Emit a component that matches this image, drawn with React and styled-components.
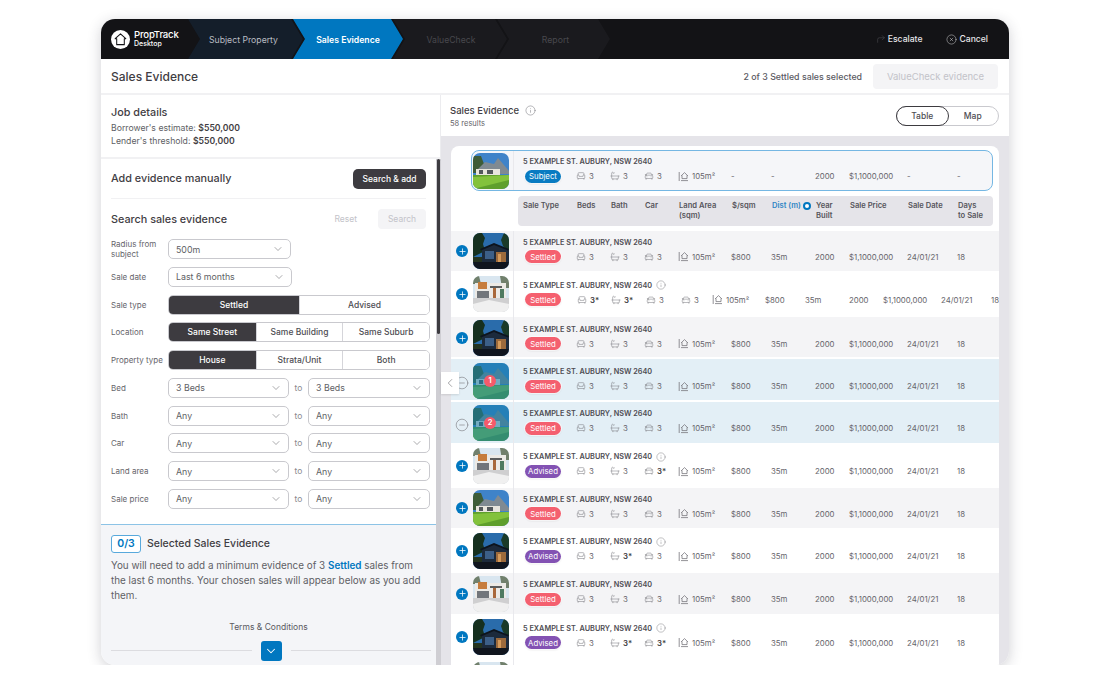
import React from "react";
import styled, { createGlobalStyle } from "styled-components";
import { Armchair, Bath, CarFront, ChevronDown, ChevronLeft, CircleMinus, CircleX, CornerUpRight, Info, Plus } from "lucide-react";

const GlobalStyle = createGlobalStyle`
  html, body { margin: 0; background: #fff; }
  body { font-family: "Inter", "Liberation Sans", sans-serif; color: #3f3d43; }
  * { box-sizing: border-box; }
`;

const Frame = styled.div`
  width: 908px;
  height: 646px;
  margin: 19px 0 0 101px;
  border-radius: 14px;
  overflow: hidden;
  display: flex;
  flex-direction: column;
  background: #fff;
  box-shadow: 0 3px 14px rgba(40, 40, 60, .22);
`;

const Header = styled.header`
  height: 40px;
  flex: none;
  display: flex;
  align-items: stretch;
  background: #131316;
`;

const Brand = styled.div`
  width: 87px;
  flex: none;
  display: flex;
  align-items: center;
  gap: 4px;
  padding-left: 10px;
  color: #fff;
`;

const BrandText = styled.div`
  font-size: 9.6px;
  font-weight: 500;
  line-height: 10px;
  letter-spacing: -.2px;
  small { display: block; font-size: 7px; font-weight: 500; letter-spacing: 0; line-height: 8px; }
`;

const toneBg = { done: "#141e2a", active: "#0077c0", todo: "#1a1a1e" };
const toneFg = { done: "#b9bcc2", active: "#fff", todo: "#48484d" };

const Step = styled.div`
  width: ${p => p.$w}px;
  margin-left: ${p => p.$first ? 0 : -10}px;
  padding: 1px ${p => p.$inset || 0}px 0 ${p => p.$shift || 0}px;
  display: flex;
  align-items: center;
  justify-content: center;
  font-size: 8.7px;
  font-weight: ${p => p.$tone === "active" ? 600 : 400};
  background: ${p => toneBg[p.$tone]};
  color: ${p => toneFg[p.$tone]};
  clip-path: polygon(0 0, calc(100% - 12px) 0, 100% 50%, calc(100% - 12px) 100%, 0 100%, 12px 50%);
`;

const HeaderActions = styled.div`
  margin-left: auto;
  padding-right: 21px;
  display: flex;
  align-items: center;
  gap: 24px;
`;

const HeaderAction = styled.div`
  display: flex;
  align-items: center;
  gap: 2px;
  font-size: 8.6px;
  font-weight: 500;
  color: #e6e6e8;
`;

const TitleBar = styled.div`
  height: 36px;
  flex: none;
  display: flex;
  align-items: center;
  padding: 0 11px 0 10px;
  border-bottom: 2px solid #f1f1f3;
`;

const PageTitle = styled.h1`
  margin: 1px 0 0;
  font-size: 12px;
  font-weight: 500;
  color: #3f3d43;
`;

const SelectedCount = styled.div`
  margin-left: auto;
  margin-right: 11px;
  font-size: 8.8px;
  font-weight: 500;
  color: #5a595f;
`;

const EvidenceButton = styled.button`
  width: 125px;
  height: 25px;
  border: 0;
  border-radius: 4px;
  background: #f4f4f6;
  color: #c3c3c9;
  font: 400 9.5px "Inter", sans-serif;
`;

const Body = styled.div`
  flex: 1;
  min-height: 0;
  display: flex;
`;

const Sidebar = styled.aside`
  width: 340px;
  flex: none;
  display: flex;
  flex-direction: column;
`;

const SidebarScroll = styled.div`
  flex: 1;
  min-height: 0;
  display: flex;
`;

const SidebarContent = styled.div`
  width: 335px;
  display: flex;
  flex-direction: column;
`;

const ScrollTrack = styled.div`
  width: 5px;
  position: relative;
  background: #cfced3;
`;

const ScrollThumb = styled.div`
  position: absolute;
  top: 0;
  left: 1px;
  width: 3px;
  height: 175px;
  border-radius: 2px;
  background: #3d3b40;
`;

const JobSection = styled.section`
  height: 64px;
  flex: none;
  padding: 11px 10px 0;
  border-bottom: 2px solid #f1f1f3;
  border-right: 1px solid #ececef;
`;

const SectionTitle = styled.h2`
  margin: 0;
  font-size: 10.8px;
  font-weight: 500;
  line-height: 13px;
  color: #3f3d43;
`;

const JobLine = styled.div`
  font-size: 8.7px;
  line-height: 12.5px;
  color: #605f65;
  &:first-of-type { margin-top: 3px; }
  b { font-weight: 600; color: #3f3d43; }
`;

const AddRow = styled.div`
  height: 40px;
  flex: none;
  margin: 0 10px;
  display: flex;
  align-items: center;
  justify-content: space-between;
  border-bottom: 1px solid #f1f1f3;
`;

const DarkButton = styled.button`
  width: 73px;
  height: 20px;
  border: 0;
  border-radius: 5px;
  background: #3d3b40;
  color: #fff;
  font: 500 8.5px "Inter", sans-serif;
`;

const SearchHead = styled.div`
  flex: none;
  margin: 10px 10px 10px;
  height: 20px;
  display: flex;
  align-items: center;
`;

const ResetLabel = styled.span`
  margin-left: auto;
  margin-right: 21px;
  font-size: 8.5px;
  color: #c3c3c9;
`;

const SearchButton = styled.button`
  width: 48px;
  height: 20px;
  border: 0;
  border-radius: 4px;
  background: #f4f4f6;
  color: #c3c3c9;
  font: 400 8.5px "Inter", sans-serif;
`;

const Form = styled.div`
  flex: none;
  padding: 0 6px 0 10px;
  display: flex;
  flex-direction: column;
  gap: 7.75px;
`;

const FormRow = styled.div`
  height: 20px;
  display: flex;
  align-items: center;
`;

const FieldLabel = styled.label`
  width: 57px;
  flex: none;
  font-size: 8px;
  line-height: 10px;
  color: #66656b;
`;

const SelectBox = styled.div`
  width: ${p => p.$w}px;
  height: 20px;
  flex: none;
  display: flex;
  align-items: center;
  justify-content: space-between;
  padding: 0 6px 0 7px;
  border: 1px solid #c9c9ce;
  border-radius: 5px;
  background: #fff;
  font-size: 8.8px;
  color: #605f65;
`;

const ToLabel = styled.span`
  width: 19px;
  text-align: center;
  font-size: 8.5px;
  color: #8b8a90;
`;

const Segments = styled.div`
  width: 262px;
  height: 20px;
  display: grid;
  grid-template-columns: repeat(${p => p.$count}, 1fr);
  border: 1px solid #c9c9ce;
  border-radius: 5px;
  overflow: hidden;
`;

const Segment = styled.div`
  display: flex;
  align-items: center;
  justify-content: center;
  font-size: 8.5px;
  font-weight: 500;
  background: ${p => p.$on ? "#3d3b40" : "#fff"};
  color: ${p => p.$on ? "#fff" : "#4e4d53"};
  & + & { border-left: 1px solid #d5d5da; }
`;

const SelectedPanel = styled.section`
  flex: 1;
  margin-top: 15px;
  padding: 10px 5px 0 10px;
  border-top: 1px solid #8cc3e6;
  background: #f4f5f8;
  display: flex;
  flex-direction: column;
`;

const SelectedHead = styled.div`
  display: flex;
  align-items: center;
  gap: 6px;
`;

const CountBadge = styled.div`
  width: 30px;
  height: 18px;
  display: flex;
  align-items: center;
  justify-content: center;
  border: 1px solid #58a9dc;
  border-radius: 3px;
  background: #fff;
  color: #0077c0;
  font-size: 10.5px;
  font-weight: 600;
`;

const SelectedTitle = styled.h3`
  margin: 0;
  font-size: 10.5px;
  font-weight: 500;
  color: #3f3d43;
`;

const SelectedCopy = styled.p`
  margin: 5px 0 0;
  padding-right: 8px;
  font-size: 9.9px;
  line-height: 15px;
  color: #605f65;
  b { color: #0077c0; font-weight: 600; }
`;

const TermsLabel = styled.div`
  margin: 19px 5px 0 0;
  text-align: center;
  font-size: 8.5px;
  color: #5a595f;
`;

const ExpandRow = styled.div`
  margin-top: 9px;
  display: flex;
  align-items: center;
  gap: 9px;
  &::before, &::after { content: ""; flex: 1; height: 1px; background: #dcdce0; }
`;

const ExpandButton = styled.div`
  width: 21px;
  height: 20px;
  display: flex;
  align-items: center;
  justify-content: center;
  border-radius: 3px;
  background: #0077c0;
  color: #fff;
`;

const Results = styled.main`
  flex: 1;
  min-width: 0;
  position: relative;
  display: flex;
  flex-direction: column;
  background: #e5e4e9;
`;

const ResultsHead = styled.div`
  height: 41px;
  flex: none;
  display: flex;
  align-items: center;
  padding: 0 10px 0 9px;
  background: #fff;
`;

const ResultsTitle = styled.div`
  display: flex;
  align-items: center;
  gap: 6px;
  padding-top: 1px;
  font-size: 9.5px;
  font-weight: 500;
  color: #3f3d43;
`;

const ResultsCount = styled.div`
  margin-top: 3px;
  font-size: 7.5px;
  color: #66656b;
`;

const Toggle = styled.div`
  width: 103px;
  height: 20px;
  margin-left: auto;
  display: flex;
  border: 1px solid #c9c9ce;
  border-radius: 10px;
`;

const ToggleItem = styled.div`
  flex: 1;
  margin: -1px;
  display: flex;
  align-items: center;
  justify-content: center;
  font-size: 8.5px;
  font-weight: 500;
  color: #4e4d53;
  border-radius: 10px;
  border: 1px solid ${p => p.$on ? "#3d3b40" : "transparent"};
`;

const CollapseTab = styled.div`
  position: absolute;
  left: 0;
  top: 277px;
  width: 18px;
  height: 22px;
  z-index: 2;
  display: flex;
  align-items: center;
  justify-content: center;
  background: #fff;
  color: #66656b;
  box-shadow: 0 1px 2px rgba(0, 0, 0, .12);
`;

const TableCard = styled.div`
  flex: 1;
  min-height: 0;
  margin: 10px 10px 0;
  padding-top: 4px;
  border-radius: 8px 8px 0 0;
  background: #fff;
  overflow: hidden;
`;

const SubjectRow = styled.div`
  width: 522px;
  height: 41px;
  margin-left: 20px;
  display: flex;
  align-items: center;
  border: 1px solid #75b7e3;
  border-radius: 8px;
  background: #f5f6f9;
`;

const SubjectThumbCell = styled.div`
  width: 42px;
  height: 100%;
  flex: none;
  display: flex;
  align-items: center;
  padding-left: 1px;
  border-right: 1px solid #e9e9ed;
`;

const columns = "54px 34px 34px 34px 53px 40px 44px 34px 58px 50px 40px";
const wideColumns = "55px 34px 35px 35px 31px 53px 40px 44px 34px 58px 50px 30px";

const ColumnHead = styled.div`
  width: 475px;
  height: 30px;
  margin: 5px 0 5px 67px;
  padding: 5px 0 0 5px;
  display: grid;
  grid-template-columns: ${columns};
  border-radius: 4px;
  background: #e5e4e9;
`;

const ColumnLabel = styled.div`
  display: flex;
  align-items: flex-start;
  gap: 2px;
  font-size: 7.6px;
  font-weight: 600;
  line-height: 10px;
  white-space: pre-line;
  color: ${p => p.$active ? "#2f86c5" : "#56555b"};
`;

const SortDot = styled.span`
  width: 8px;
  height: 8px;
  flex: none;
  margin-top: 1px;
  border-radius: 50%;
  border: 2.5px solid #0077c0;
  background: #fff;
`;

const Row = styled.div`
  height: ${p => p.$h}px;
  display: flex;
  overflow: hidden;
  background: ${p => p.$selected ? "#e3eff6" : p.$shade ? "#f4f4f6" : "#fff"};
  box-shadow: ${p => p.$gap ? "inset 0 -2px 0 #fff" : "none"};
`;

const RowLead = styled.div`
  width: 63px;
  height: 100%;
  flex: none;
  display: flex;
  align-items: ${p => p.$stub ? "flex-start" : "center"};
  padding: ${p => p.$stub ? "2px" : "0"} 0 0 4px;
  gap: 3px;
  border-right: 1px solid #e9e9ed;
`;

const AddButton = styled.div`
  width: 12px;
  height: 12px;
  margin: 0 1px;
  flex: none;
  display: flex;
  align-items: center;
  justify-content: center;
  border-radius: 50%;
  background: #0077c0;
  color: #fff;
`;

const LeadSpacer = styled.div`
  width: 14px;
  flex: none;
`;

const RemoveButton = styled.div`
  width: 14px;
  height: 14px;
  flex: none;
  color: #76757b;
`;

const ThumbWrap = styled.div`
  width: 36px;
  height: 36px;
  flex: none;
  margin-left: ${p => p.$flush ? 0 : 1}px;
  position: relative;
  border-radius: 7px;
  overflow: hidden;
  ${p => p.$tint && `
    &::after {
      content: "";
      position: absolute;
      inset: 0;
      background: rgba(16, 126, 170, .55);
    }
  `}
`;

const OrderBadge = styled.div`
  position: absolute;
  left: 11px;
  top: 12px;
  width: 12px;
  height: 12px;
  z-index: 1;
  display: flex;
  align-items: center;
  justify-content: center;
  border-radius: 50%;
  background: #f55a6a;
  color: #fff;
  font-size: 7.5px;
  font-weight: 600;
`;

const RowMain = styled.div`
  flex: 1;
  min-width: 0;
  padding: 0 0 2px 8px;
  display: flex;
  flex-direction: column;
  justify-content: center;
  gap: 3px;
`;

const Address = styled.div`
  height: 10px;
  padding-left: 1px;
  display: flex;
  align-items: center;
  gap: 4px;
  font-size: 7.3px;
  font-weight: 600;
  color: #4e4d53;
  white-space: nowrap;
`;

const Cells = styled.div`
  display: grid;
  grid-template-columns: ${p => p.$wide ? wideColumns : columns};
  align-items: center;
  height: 13px;
`;

const Cell = styled.div`
  display: flex;
  align-items: center;
  gap: 3px;
  font-size: 7.8px;
  color: #66656b;
  white-space: nowrap;
  b { font-weight: 600; color: #3f3d43; }
`;

const badgeBg = { Settled: "#f55a6a", Advised: "#7e4bb0", Subject: "#0077c0" };

const Badge = styled.div`
  width: 36px;
  height: 13px;
  margin-left: 3px;
  display: flex;
  align-items: center;
  justify-content: center;
  border-radius: 7px;
  background: ${p => badgeBg[p.$kind]};
  color: #fff;
  opacity: .96;
  font-size: 7.8px;
  box-shadow: 0 0 0 1px rgba(255, 255, 255, .7), 0 1px 2px rgba(0, 0, 0, .12);
`;

function Logo() {
  return (
    <svg width="19" height="19" viewBox="0 0 20 20">
      <circle cx="10" cy="10" r="10" fill="#fff" />
      <path d="M10 4 15.6 9.2H14v6.2H6V9.2H4.4z" fill="none" stroke="#131316" strokeWidth="1.1" strokeLinejoin="round" />
    </svg>
  );
}

function LandIcon() {
  return (
    <svg width="11" height="11" viewBox="0 0 11 11" fill="none" stroke="#77767c" strokeWidth=".8">
      <path d="M1.2 1v9" />
      <path d="M3 5 6.5 1.6 10 5M4 4.4v3.2h5V4.4M3 9.6h7" />
    </svg>
  );
}

function Scene({ kind }) {
  if (kind === "dusk") {
    return (
      <svg width="36" height="36" viewBox="0 0 36 36">
        <rect width="36" height="36" fill="#2a6cab" />
        <path d="M0 0h9l3 5-2 6 2 7-12 6z" fill="#16301f" />
        <path d="M36 0h-5l-3 7 2 6 6 6z" fill="#1a3a28" />
        <path d="M9 16 21 11l15 6v12H9z" fill="#1c2a3c" />
        <path d="M7 16 21 10l15 6-1 1.5-14-5.5-13 5.5z" fill="#0d141e" />
        <rect x="12" y="18" width="9" height="8" fill="#3c5f88" />
        <rect x="23" y="19" width="10" height="10" fill="#9c6a3c" />
        <rect x="25" y="21" width="3" height="8" fill="#d59a5a" />
        <rect y="29" width="36" height="7" fill="#10151e" />
        <path d="M0 24h9v5H0z" fill="#24331f" />
      </svg>
    );
  }
  if (kind === "modern") {
    return (
      <svg width="36" height="36" viewBox="0 0 36 36">
        <rect width="36" height="36" fill="#d9e6f0" />
        <path d="M0 0h6l2 8H0zM27 0h9v12h-7z" fill="#71806c" />
        <rect x="2" y="7" width="31" height="15" fill="#eceae6" />
        <rect x="5" y="6" width="9" height="7" fill="#c67c3c" />
        <rect x="17" y="10" width="12" height="2" fill="#5b5d5e" />
        <rect x="20" y="12" width="3" height="10" fill="#a9683a" />
        <rect x="4" y="15" width="12" height="7" fill="#71757a" />
        <rect x="27" y="13" width="4" height="9" fill="#4e7a60" />
        <rect y="22" width="36" height="14" fill="#cfcfd0" />
        <path d="M0 28 16 24l20 4v8H0z" fill="#f0f0f0" />
      </svg>
    );
  }
  return (
    <svg width="36" height="36" viewBox="0 0 36 36">
      <rect width="36" height="36" fill="#3f83c9" />
      <path d="M0 3h8l3 8-2 9H0z" fill="#3e5c38" />
      <path d="M5 16 12 9l9 2 4-6 11 13v3H5z" fill="#808a92" />
      <rect x="3" y="16" width="24" height="6" fill="#e8e5dd" />
      <rect x="6" y="17" width="4" height="4" fill="#53585c" />
      <rect x="14" y="17" width="6" height="4" fill="#53585c" />
      <rect y="22" width="36" height="14" fill="#5f9f2c" />
      <path d="M0 24 36 22v5L0 36z" fill="#83c23c" />
    </svg>
  );
}

const Val = ({ v }) => (v.endsWith("*") ? <b>{v}</b> : <span>{v}</span>);

function Specs({ beds, bath, car, extraCar, plain }) {
  return (
    <>
      <Cell><Armchair size={10} strokeWidth={1.2} color="#77767c" /><Val v={beds} /></Cell>
      <Cell><Bath size={10} strokeWidth={1.2} color="#77767c" /><Val v={bath} /></Cell>
      <Cell><CarFront size={10} strokeWidth={1.2} color="#77767c" /><Val v={car} /></Cell>
      {extraCar && <Cell><CarFront size={10} strokeWidth={1.2} color="#77767c" /><span>3</span></Cell>}
      <Cell><LandIcon /><span>105m²</span></Cell>
      <Cell>{plain ? "-" : "$800"}</Cell>
      <Cell>{plain ? "-" : "35m"}</Cell>
      <Cell>2000</Cell>
      <Cell>$1,1000,000</Cell>
      <Cell>{plain ? "-" : "24/01/21"}</Cell>
      <Cell>{plain ? "-" : "18"}</Cell>
    </>
  );
}

const sales = [
  { h: 40, shade: true, kind: "Settled", scene: "dusk", beds: "3", bath: "3", car: "3" },
  { h: 46, kind: "Settled", scene: "modern", info: true, beds: "3*", bath: "3*", car: "3", extraCar: true },
  { h: 42, shade: true, gap: true, kind: "Settled", scene: "dusk", beds: "3", bath: "3", car: "3" },
  { h: 43, gap: true, kind: "Settled", scene: "lawn", order: 1, beds: "3", bath: "3", car: "3" },
  { h: 41, kind: "Settled", scene: "lawn", order: 2, beds: "3", bath: "3", car: "3" },
  { h: 45, kind: "Advised", scene: "modern", info: true, beds: "3", bath: "3", car: "3*" },
  { h: 40, shade: true, kind: "Settled", scene: "lawn", beds: "3", bath: "3", car: "3" },
  { h: 45, kind: "Advised", scene: "dusk", info: true, beds: "3", bath: "3*", car: "3" },
  { h: 41, shade: true, kind: "Settled", scene: "modern", beds: "3", bath: "3", car: "3" },
  { h: 46, kind: "Advised", scene: "dusk", info: true, beds: "3", bath: "3*", car: "3*" },
];

const ADDRESS = "5 EXAMPLE ST. AUBURY, NSW 2640";

function SaleRow({ sale }) {
  const selected = !!sale.order;
  return (
    <Row $h={sale.h} $shade={sale.shade} $selected={selected} $gap={sale.gap}>
      <RowLead>
        {selected
          ? <RemoveButton><CircleMinus size={14} strokeWidth={1} /></RemoveButton>
          : <AddButton><Plus size={9} strokeWidth={2} /></AddButton>}
        <ThumbWrap $tint={selected}>
          <Scene kind={sale.scene} />
          {selected && <OrderBadge>{sale.order}</OrderBadge>}
        </ThumbWrap>
      </RowLead>
      <RowMain>
        <Address>{ADDRESS}{sale.info && <Info size={10} strokeWidth={1} color="#6b6a70" />}</Address>
        <Cells $wide={sale.extraCar}>
          <Badge $kind={sale.kind}>{sale.kind}</Badge>
          <Specs {...sale} />
        </Cells>
      </RowMain>
    </Row>
  );
}

function Select({ w, value }) {
  return (
    <SelectBox $w={w}>
      {value}
      <ChevronDown size={12} strokeWidth={1} color="#55545a" />
    </SelectBox>
  );
}

function SegmentRow({ label, options }) {
  return (
    <FormRow>
      <FieldLabel>{label}</FieldLabel>
      <Segments $count={options.length}>
        {options.map((o, i) => <Segment key={o} $on={i === 0}>{o}</Segment>)}
      </Segments>
    </FormRow>
  );
}

function RangeRow({ label, value }) {
  return (
    <FormRow>
      <FieldLabel>{label}</FieldLabel>
      <Select w={121} value={value} />
      <ToLabel>to</ToLabel>
      <Select w={122} value={value} />
    </FormRow>
  );
}

const headLabels = ["Sale Type", "Beds", "Bath", "Car", "Land Area\n(sqm)", "$/sqm", "Dist (m)", "Year\nBuilt", "Sale Price", "Sale Date", "Days\nto Sale"];

export default function App() {
  return (
    <>
      <GlobalStyle />
      <Frame>
        <Header>
          <Brand>
            <Logo />
            <BrandText>PropTrack<small>Desktop</small></BrandText>
          </Brand>
          <Step $first $w={115} $tone="done" $inset={4}>Subject Property</Step>
          <Step $w={110} $tone="active">Sales Evidence</Step>
          <Step $w={114} $tone="todo" $shift={2}>ValueCheck</Step>
          <Step $w={113} $tone="todo" $shift={4}>Report</Step>
          <HeaderActions>
            <HeaderAction><CornerUpRight size={10} strokeWidth={1.2} color="#55555a" />Escalate</HeaderAction>
            <HeaderAction><CircleX size={11} strokeWidth={1} />Cancel</HeaderAction>
          </HeaderActions>
        </Header>
        <TitleBar>
          <PageTitle>Sales Evidence</PageTitle>
          <SelectedCount>2 of 3 Settled sales selected</SelectedCount>
          <EvidenceButton>ValueCheck evidence</EvidenceButton>
        </TitleBar>
        <Body>
          <Sidebar>
            <JobSection>
              <SectionTitle>Job details</SectionTitle>
              <JobLine>Borrower's estimate: <b>$550,000</b></JobLine>
              <JobLine>Lender's threshold: <b>$550,000</b></JobLine>
            </JobSection>
            <SidebarScroll>
              <SidebarContent>
                <AddRow>
                  <SectionTitle>Add evidence manually</SectionTitle>
                  <DarkButton>Search &amp; add</DarkButton>
                </AddRow>
                <SearchHead>
                  <SectionTitle>Search sales evidence</SectionTitle>
                  <ResetLabel>Reset</ResetLabel>
                  <SearchButton>Search</SearchButton>
                </SearchHead>
                <Form>
                  <FormRow><FieldLabel>Radius from subject</FieldLabel><Select w={123} value="500m" /></FormRow>
                  <FormRow><FieldLabel>Sale date</FieldLabel><Select w={124} value="Last 6 months" /></FormRow>
                  <SegmentRow label="Sale type" options={["Settled", "Advised"]} />
                  <SegmentRow label="Location" options={["Same Street", "Same Building", "Same Suburb"]} />
                  <SegmentRow label="Property type" options={["House", "Strata/Unit", "Both"]} />
                  <RangeRow label="Bed" value="3 Beds" />
                  <RangeRow label="Bath" value="Any" />
                  <RangeRow label="Car" value="Any" />
                  <RangeRow label="Land area" value="Any" />
                  <RangeRow label="Sale price" value="Any" />
                </Form>
                <SelectedPanel>
                  <SelectedHead>
                    <CountBadge>0/3</CountBadge>
                    <SelectedTitle>Selected Sales Evidence</SelectedTitle>
                  </SelectedHead>
                  <SelectedCopy>
                    You will need to add a minimum evidence of 3 <b>Settled</b> sales from the last 6 months. Your chosen sales will appear below as you add them.
                  </SelectedCopy>
                  <TermsLabel>Terms &amp; Conditions</TermsLabel>
                  <ExpandRow>
                    <ExpandButton><ChevronDown size={14} strokeWidth={1.8} /></ExpandButton>
                  </ExpandRow>
                </SelectedPanel>
              </SidebarContent>
              <ScrollTrack><ScrollThumb /></ScrollTrack>
            </SidebarScroll>
          </Sidebar>
          <Results>
            <CollapseTab><ChevronLeft size={14} strokeWidth={1} /></CollapseTab>
            <ResultsHead>
              <div>
                <ResultsTitle>Sales Evidence <Info size={11} strokeWidth={1} color="#66656b" /></ResultsTitle>
                <ResultsCount>58 results</ResultsCount>
              </div>
              <Toggle>
                <ToggleItem $on>Table</ToggleItem>
                <ToggleItem>Map</ToggleItem>
              </Toggle>
            </ResultsHead>
            <TableCard>
              <SubjectRow>
                <SubjectThumbCell>
                  <ThumbWrap $flush><Scene kind="lawn" /></ThumbWrap>
                </SubjectThumbCell>
                <RowMain>
                  <Address>{ADDRESS}</Address>
                  <Cells>
                    <Badge $kind="Subject">Subject</Badge>
                    <Specs beds="3" bath="3" car="3" plain />
                  </Cells>
                </RowMain>
              </SubjectRow>
              <ColumnHead>
                {headLabels.map(l => (
                  <ColumnLabel key={l} $active={l === "Dist (m)"}>
                    {l === "Dist (m)" ? <>{l}<SortDot /></> : l}
                  </ColumnLabel>
                ))}
              </ColumnHead>
              {sales.map((s, i) => <SaleRow key={i} sale={s} />)}
              <Row $h={5}>
                <RowLead $stub>
                  <LeadSpacer />
                  <ThumbWrap><Scene kind="modern" /></ThumbWrap>
                </RowLead>
              </Row>
            </TableCard>
          </Results>
        </Body>
      </Frame>
    </>
  );
}
